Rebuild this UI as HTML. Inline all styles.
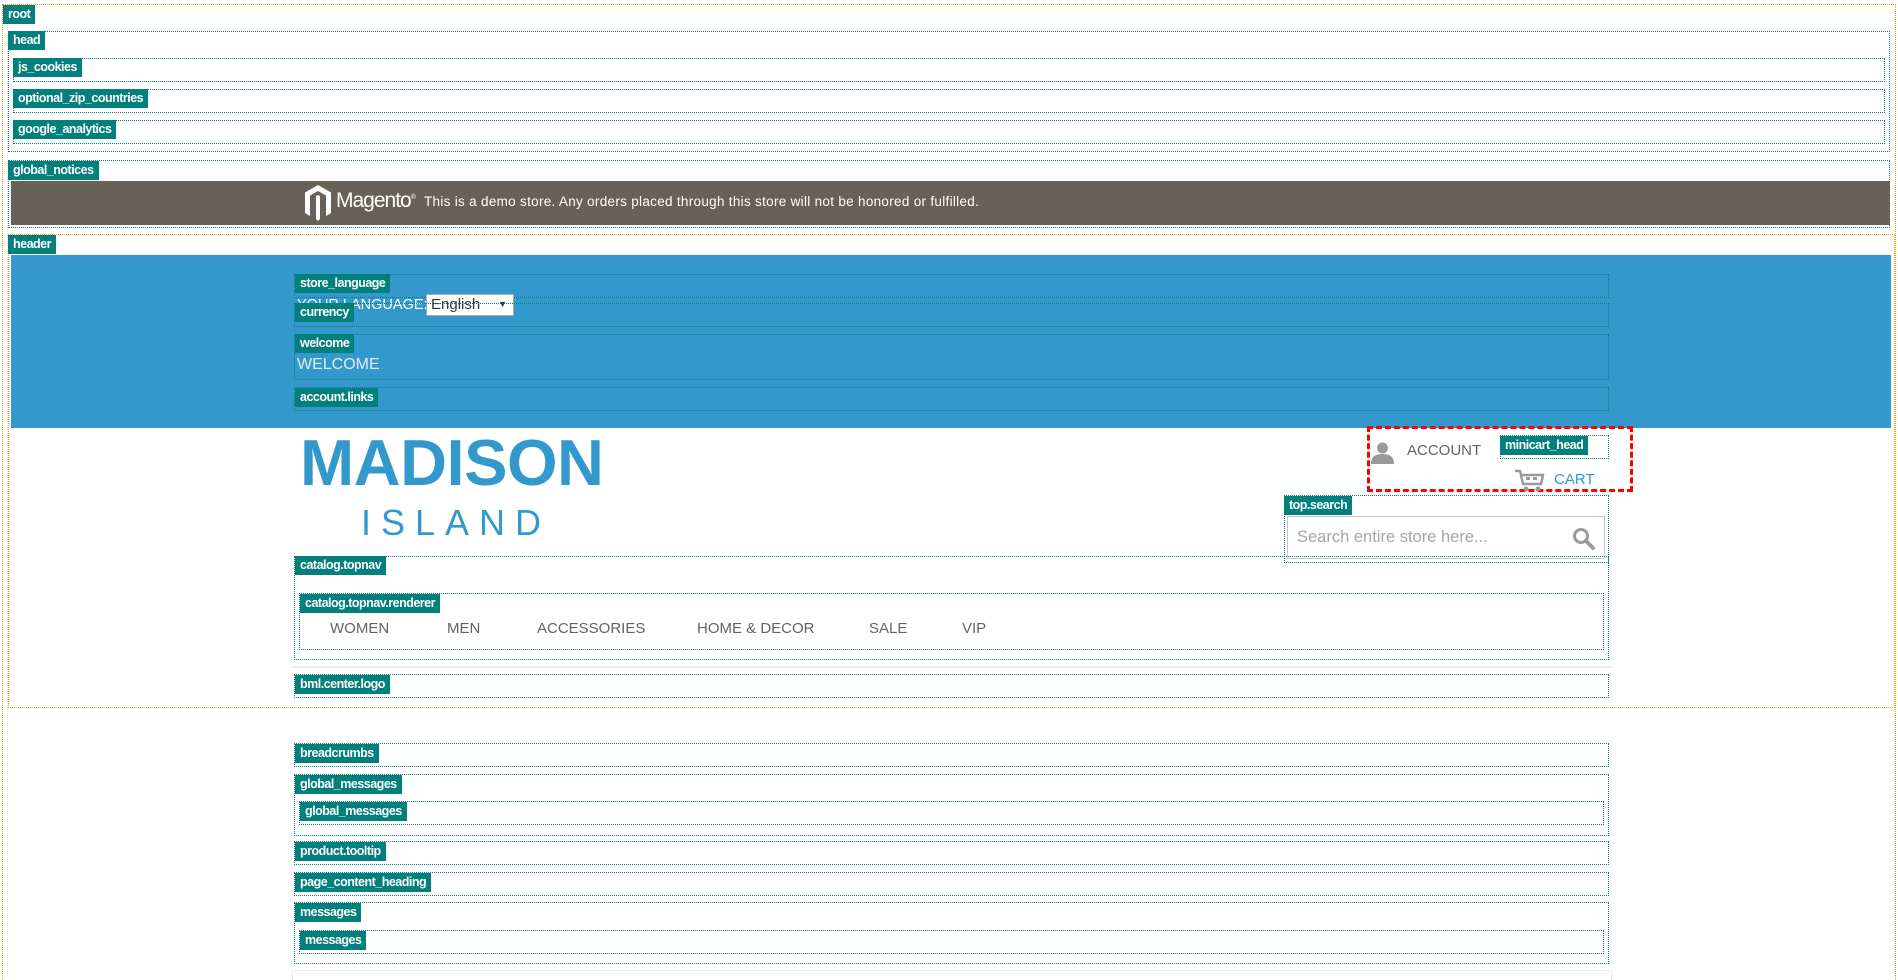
<!DOCTYPE html>
<html style="width:1898px;height:980px;overflow:hidden"><head><meta charset="utf-8"><style>
*{margin:0;padding:0;box-sizing:border-box}
body{width:1898px;height:980px;position:relative;background:#fff;font-family:"Liberation Sans",sans-serif;overflow:hidden}
.b{position:absolute;border:1px dotted #0b7a7a}
.o{position:absolute;border:1px dotted #f0a500}
.l{position:absolute;background:#037f7c;color:#fff;font:bold 12.5px/19px "Liberation Sans",sans-serif;padding:0 5px;letter-spacing:-0.5px;height:19px;white-space:nowrap}
.t{position:absolute;white-space:nowrap}
.nav{position:absolute;top:620px;font-size:15px;color:#636363;white-space:nowrap}
</style></head><body>
<div class="o" style="left:2px;top:4px;width:1894px;height:976px;border-bottom:none"></div>
<div class="l" style="left:3px;top:5px">root</div>

<div class="b" style="left:8px;top:31px;width:1882px;height:121px"></div>
<div class="l" style="left:8px;top:31px">head</div>
<div class="b" style="left:13px;top:58px;width:1872px;height:24px"></div>
<div class="l" style="left:13px;top:58px">js_cookies</div>
<div class="b" style="left:13px;top:89px;width:1872px;height:24px"></div>
<div class="l" style="left:13px;top:89px">optional_zip_countries</div>
<div class="b" style="left:13px;top:120px;width:1872px;height:24px"></div>
<div class="l" style="left:13px;top:120px">google_analytics</div>

<div class="b" style="left:8px;top:160px;width:1882px;height:68px"></div>
<div class="l" style="left:8px;top:161px">global_notices</div>
<div style="position:absolute;left:11px;top:181px;width:1879px;height:44px;background:#686157"></div>
<svg style="position:absolute;left:303px;top:184px" width="30" height="38" viewBox="0 0 30 38"><path d="M15 1 L28 8.5 V29 L23 32 V11.5 L15 7 L7 11.5 V32 L2 29 V8.5 Z" fill="#fff"/><path d="M13 12 L15 11 L17 12 V35 L15 37 L13 35 Z" fill="#fff"/></svg>
<div class="t" style="left:336px;top:189px;color:#fff;font-size:21px;letter-spacing:-1px">Magento<sup style="font-size:7px">®</sup></div>
<div class="t" style="left:424px;top:194px;color:#fff;font-size:13.5px;letter-spacing:0.3px">This is a demo store. Any orders placed through this store will not be honored or fulfilled.</div>

<div class="o" style="left:8px;top:234px;width:1887px;height:474px"></div>
<div class="l" style="left:8px;top:235px">header</div>
<div style="position:absolute;left:11px;top:255px;width:1880px;height:173px;background:#3399cc"></div>
<div class="b" style="left:294px;top:274px;width:1315px;height:24px"></div>
<div class="t" style="left:297px;top:297px;color:#fff;font-size:14.5px">YOUR LANGUAGE:</div>
<div style="position:absolute;left:426px;top:294px;width:88px;height:22px;background:#fff;border:1px solid #aaa;font-size:15px;color:#333;padding-left:4px;line-height:19px">English<span style="position:absolute;right:6px;top:0;font-size:9px">▼</span></div>
<div class="b" style="left:294px;top:303px;width:1315px;height:24px"></div>
<div class="l" style="left:295px;top:303px">currency</div>
<div class="l" style="left:295px;top:274px">store_language</div>
<div class="b" style="left:294px;top:334px;width:1315px;height:46px"></div>
<div class="l" style="left:295px;top:334px">welcome</div>
<div class="t" style="left:297px;top:356px;color:#e2ecf4;font-size:16px">WELCOME</div>
<div class="b" style="left:294px;top:387px;width:1315px;height:24px"></div>
<div class="l" style="left:295px;top:388px">account.links</div>

<div class="t" style="left:300px;top:427px;color:#3399cc;font-size:65px;font-weight:bold;letter-spacing:-0.5px;line-height:72px">MADISON</div>
<div class="t" style="left:361px;top:503px;color:#3399cc;font-size:36px;letter-spacing:10px;line-height:40px">ISLAND</div>

<div style="position:absolute;left:1367px;top:426px;width:266px;height:66px;border:3px dashed #f00"></div>
<svg style="position:absolute;left:1370px;top:442px" width="25" height="22" viewBox="0 0 25 22"><circle cx="12.5" cy="6" r="5.5" fill="#999"/><path d="M1 22 C1 14 6 12 12.5 12 C19 12 24 14 24 22 Z" fill="#999"/></svg>
<div class="t" style="left:1407px;top:442px;color:#636363;font-size:15px">ACCOUNT</div>
<div class="b" style="left:1500px;top:435px;width:109px;height:24px"></div>
<div class="l" style="left:1500px;top:436px">minicart_head</div>
<svg style="position:absolute;left:1514px;top:469px" width="32" height="24" viewBox="0 0 32 24"><path d="M1 2 H6 L9 15 H27 L29 6 H8" fill="none" stroke="#999" stroke-width="2.5"/><rect x="12" y="8" width="4" height="3" fill="#999"/><rect x="19" y="8" width="4" height="3" fill="#999"/><circle cx="12" cy="20" r="2.5" fill="#999"/><circle cx="24" cy="20" r="2.5" fill="#999"/></svg>
<div class="t" style="left:1554px;top:471px;color:#3399cc;font-size:15px">CART</div>

<div class="b" style="left:1284px;top:495px;width:325px;height:68px"></div>
<div class="l" style="left:1284px;top:496px">top.search</div>
<div style="position:absolute;left:1287px;top:516px;width:318px;height:43px;border:1px solid #c8c8c8;background:#fff"></div>
<div class="t" style="left:1297px;top:528px;color:#a6a6a6;font-size:16.5px">Search entire store here...</div>
<svg style="position:absolute;left:1572px;top:527px" width="24" height="24" viewBox="0 0 24 24"><circle cx="9" cy="9" r="6.5" fill="none" stroke="#9a9a9a" stroke-width="3"/><path d="M14 14 L21 21" stroke="#9a9a9a" stroke-width="4" stroke-linecap="round"/></svg>

<div class="b" style="left:294px;top:556px;width:1315px;height:104px"></div>
<div class="l" style="left:295px;top:556px">catalog.topnav</div>
<div class="b" style="left:299px;top:593px;width:1305px;height:57px"></div>
<div class="l" style="left:300px;top:594px">catalog.topnav.renderer</div>
<div class="nav" style="left:330px">WOMEN</div>
<div class="nav" style="left:447px">MEN</div>
<div class="nav" style="left:537px">ACCESSORIES</div>
<div class="nav" style="left:697px">HOME &amp; DECOR</div>
<div class="nav" style="left:869px">SALE</div>
<div class="nav" style="left:962px">VIP</div>
<div style="position:absolute;left:292px;top:666px;width:1320px;height:2px;background:#ececec"></div>
<div class="b" style="left:294px;top:674px;width:1315px;height:24px"></div>
<div class="l" style="left:295px;top:675px">bml.center.logo</div>

<div class="b" style="left:294px;top:743px;width:1315px;height:24px"></div>
<div class="l" style="left:295px;top:744px">breadcrumbs</div>
<div class="b" style="left:294px;top:774px;width:1315px;height:62px"></div>
<div class="l" style="left:295px;top:775px">global_messages</div>
<div class="b" style="left:299px;top:801px;width:1305px;height:24px"></div>
<div class="l" style="left:300px;top:802px">global_messages</div>
<div class="b" style="left:294px;top:841px;width:1315px;height:24px"></div>
<div class="l" style="left:295px;top:842px">product.tooltip</div>
<div class="b" style="left:294px;top:872px;width:1315px;height:24px"></div>
<div class="l" style="left:295px;top:873px">page_content_heading</div>
<div class="b" style="left:294px;top:902px;width:1315px;height:62px"></div>
<div class="l" style="left:295px;top:903px">messages</div>
<div class="b" style="left:299px;top:930px;width:1305px;height:24px"></div>
<div class="l" style="left:300px;top:931px">messages</div>
<div style="position:absolute;left:292px;top:970px;width:1320px;height:10px;border:1px solid #ececec;border-bottom:none"></div>
</body></html>
